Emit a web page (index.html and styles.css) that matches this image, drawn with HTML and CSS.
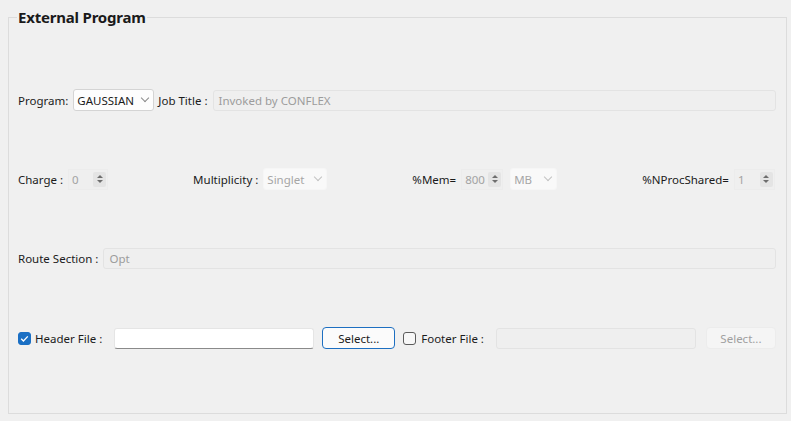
FILE: index.html
```html
<!DOCTYPE html>
<html lang="en">
<head>
  <meta charset="UTF-8" />
  <title>External Program</title>
  <link rel="stylesheet" href="styles.css">
</head>
<body>

  <!-- External Program group -->
  <fieldset class="group">
    <legend>External Program</legend>

    <div class="row">
      <span class="label">Program:</span>
      <div class="combo program"><span>GAUSSIAN</span><i class="chev"></i></div>
      <span class="label">Job Title :</span>
      <div class="field off grow">Invoked by CONFLEX</div>
    </div>

    <div class="row spread">
      <div class="item">
        <span class="label">Charge :</span>
        <div class="spin charge"><span>0</span><b class="arrows"><i class="up"></i><i class="down"></i></b></div>
      </div>
      <div class="item">
        <span class="label">Multiplicity :</span>
        <div class="combo off multi"><span>Singlet</span><i class="chev"></i></div>
      </div>
      <div class="item">
        <span class="label">%Mem=</span>
        <div class="spin mem"><span>800</span><b class="arrows"><i class="up"></i><i class="down"></i></b></div>
        <div class="combo off unit"><span>MB</span><i class="chev"></i></div>
      </div>
      <div class="item">
        <span class="label">%NProcShared=</span>
        <div class="spin nproc"><span>1</span><b class="arrows"><i class="up"></i><i class="down"></i></b></div>
      </div>
    </div>

    <div class="row">
      <span class="label">Route Section :</span>
      <div class="field off grow">Opt</div>
    </div>

    <div class="row files">
      <span class="check on"><svg viewBox="0 0 13 13" width="13" height="13"><path d="M3.2 6.8 L5.4 9 L9.8 4.4" fill="none" stroke="#fff" stroke-width="1.3"/></svg></span>
      <span class="label">Header File :</span>
      <div class="field edit"></div>
      <button class="btn default">Select...</button>
      <span class="check"></span>
      <span class="label">Footer File :</span>
      <div class="field off path"></div>
      <button class="btn" disabled>Select...</button>
    </div>
  </fieldset>

</body>
</html>
```

FILE: styles.css
```css
/* Page */
body {
  margin: 0;
  padding: 7px 6px 0 8px;
  background: #f0f0f0;
  font-family: 'Segoe UI', 'Noto Sans', sans-serif;
  font-size: 11.5px;
  color: #1b1b1b;
  width: 791px;
  height: 421px;
  box-sizing: border-box;
  overflow: hidden;
}

/* Group box */
.group {
  margin: 0;
  width: 777px;
  height: 407px;
  box-sizing: border-box;
  border: 1px solid #dcdcdc;
  padding: 62px 10px 0 9px;
  display: flex;
  flex-direction: column;
  gap: 57px;
}

.group legend {
  font-size: 15px;
  font-weight: 700;
  line-height: 20px;
  padding: 0 1px;
  margin-left: -1px;
  color: #1a1a1a;
  letter-spacing: -0.2px;
}

.row {
  display: flex;
  align-items: center;
  height: 22px;
  gap: 4px;
}

.row.spread {
  justify-content: space-between;
  padding-right: 1px;
}

.row.files {
  margin-top: 1px;
}

.item {
  display: flex;
  align-items: center;
  gap: 5px;
}

.label {
  white-space: nowrap;
}

/* Inputs */
.field {
  height: 21px;
  box-sizing: border-box;
  border: 1px solid #e3e3e3;
  border-radius: 3px;
  padding: 0 5px;
  line-height: 19px;
  background: #f0f0f0;
}

.field.grow {
  flex: 1;
  margin-left: 1px;
}

.field.off {
  color: #9c9c9c;
  background: #efefef;
}

.field.edit {
  width: 200px;
  background: #fff;
  border-color: #e5e5e5;
  border-bottom-color: #8a8a8a;
  margin-left: 8px;
}

.field.path {
  width: 200px;
  margin-left: 8px;
}

/* Combo boxes */
.combo {
  height: 22px;
  box-sizing: border-box;
  border: 1px solid #d4d4d4;
  border-radius: 3px;
  background: #fdfdfd;
  display: flex;
  align-items: center;
  justify-content: space-between;
  padding: 0 5px 0 3px;
}

.combo.program { width: 81px; margin-left: 1px; }
.combo.multi { width: 64px; }
.combo.unit { width: 47px; margin-left: 2px; }

.combo.off {
  color: #a6a6a6;
  border-color: #f6f6f6;
  background: #f9f9f9;
}

.chev {
  width: 5px;
  height: 5px;
  border-right: 1px solid #8a8a8a;
  border-bottom: 1px solid #8a8a8a;
  transform: rotate(45deg);
  margin-top: -4px;
}

.combo.off .chev {
  border-color: #c2c2c2;
}

/* Spin boxes */
.spin {
  height: 21px;
  box-sizing: border-box;
  border: 1px solid #ececec;
  background: #efefef;
  color: #a3a3a3;
  display: flex;
  align-items: center;
  justify-content: space-between;
  padding: 0 1px 0 3px;
}

.spin.charge { width: 40px; }
.spin.mem { width: 42px; }
.spin.nproc { width: 41px; }

.arrows {
  width: 13px;
  height: 15px;
  background: #e4e4e4;
  border-radius: 2px;
  display: flex;
  flex-direction: column;
  align-items: center;
  justify-content: center;
  gap: 2px;
}

.arrows i {
  width: 0;
  height: 0;
  border-left: 3px solid transparent;
  border-right: 3px solid transparent;
}

.arrows .up { border-bottom: 3px solid #6e6e6e; }
.arrows .down { border-top: 3px solid #6e6e6e; }

/* Check boxes */
.check {
  width: 13px;
  height: 13px;
  box-sizing: border-box;
  border: 1px solid #5b5b5b;
  border-radius: 3px;
  background: #f7f7f7;
  flex: none;
  margin-right: 1px;
}

.check.on {
  background: #1a6fc4;
  border-color: #1a6fc4;
  margin-right: 0;
}

.btn + .check {
  margin-left: 4px;
}

.check svg {
  display: block;
  margin: -1px;
}

/* Buttons */
.btn {
  font: inherit;
  height: 22px;
  box-sizing: border-box;
  border: 1px solid #d0d0d0;
  border-radius: 4px;
  background: #fbfbfb;
  color: #1b1b1b;
  padding: 0;
  width: 73px;
  margin-left: 4px;
}

.btn.default {
  border-color: #1d6fc1;
}

.btn:disabled {
  width: 70px;
  margin-left: 6px;
  background: #f5f5f5;
  border-color: #ececec;
  color: #a0a0a0;
}
```
